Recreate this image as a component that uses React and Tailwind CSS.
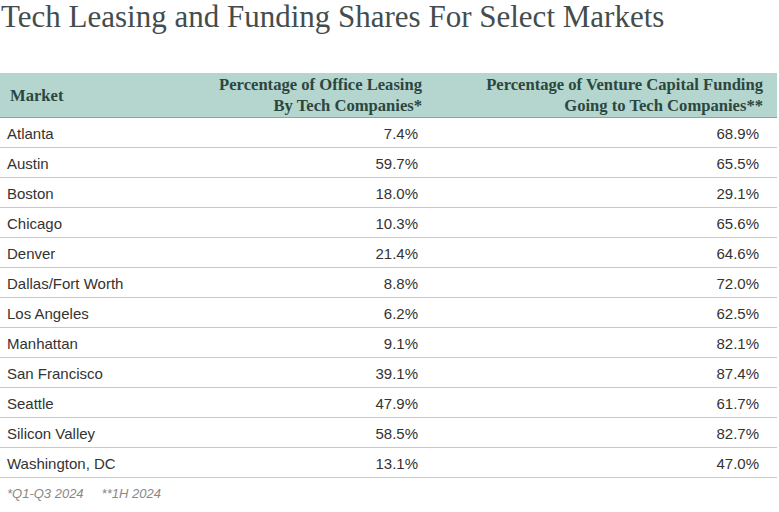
const rows = [
  ["Atlanta", "7.4%", "68.9%"],
  ["Austin", "59.7%", "65.5%"],
  ["Boston", "18.0%", "29.1%"],
  ["Chicago", "10.3%", "65.6%"],
  ["Denver", "21.4%", "64.6%"],
  ["Dallas/Fort Worth", "8.8%", "72.0%"],
  ["Los Angeles", "6.2%", "62.5%"],
  ["Manhattan", "9.1%", "82.1%"],
  ["San Francisco", "39.1%", "87.4%"],
  ["Seattle", "47.9%", "61.7%"],
  ["Silicon Valley", "58.5%", "82.7%"],
  ["Washington, DC", "13.1%", "47.0%"],
];

export default function App() {
  return (
    <div className="w-[779px] h-[512px] bg-white overflow-hidden">
      <h1 className="font-['Liberation_Serif',serif] text-[31px] leading-[34px] text-[#434d4d] pl-[1px] h-[73px]">
        Tech Leasing and Funding Shares For Select Markets
      </h1>
      <table className="w-[777px] border-collapse table-fixed">
        <colgroup>
          <col className="w-[200px]" />
          <col className="w-[236px]" />
          <col className="w-[341px]" />
        </colgroup>
        <thead>
          <tr className="bg-[#b4d6ce] h-[44px] border-b border-[#8fa39f] font-['Liberation_Serif',serif] font-bold text-[16.6px] leading-[21px] text-[#2c4640]">
            <th className="text-left pl-[10px] pt-[2px]">Market</th>
            <th className="text-right pr-[14px]">
              Percentage of Office Leasing
              <br />
              By Tech Companies*
            </th>
            <th className="text-right pr-[14px]">
              Percentage of Venture Capital Funding
              <br />
              Going to Tech Companies**
            </th>
          </tr>
        </thead>
        <tbody className="font-['Liberation_Sans',sans-serif] text-[15px] text-[#333]">
          {rows.map((r) => (
            <tr key={r[0]} className="h-[30px] border-b border-[#c9c9c9]">
              <td className="pl-[7px] pt-[4px]">{r[0]}</td>
              <td className="text-right pr-[18px] pt-[4px]">{r[1]}</td>
              <td className="text-right pr-[18px] pt-[4px]">{r[2]}</td>
            </tr>
          ))}
        </tbody>
      </table>
      <div className="flex gap-[18px] pl-[7px] pt-[6px] font-['Liberation_Sans',sans-serif] italic text-[13px] text-[#888]">
        <span>*Q1-Q3 2024</span>
        <span>**1H 2024</span>
      </div>
    </div>
  );
}
